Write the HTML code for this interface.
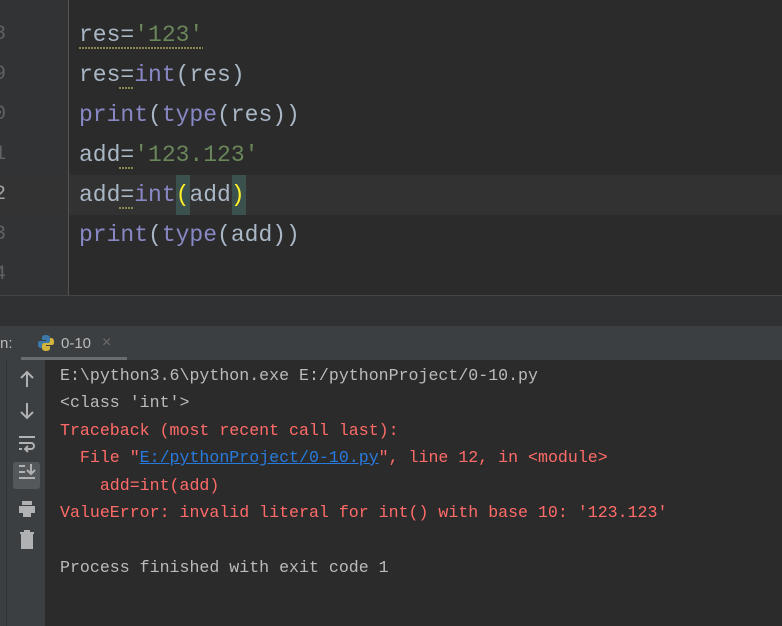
<!DOCTYPE html>
<html><head><style>
body{margin:0;width:782px;height:626px;background:#2b2b2b;overflow:hidden;position:relative;font-family:"Liberation Mono",monospace}
.abs{position:absolute}
.code{position:absolute;left:79px;font-size:23px;line-height:40px;color:#a9b7c6;white-space:pre}
.k{color:#8888c6}.s{color:#6a8759}
.ln{position:absolute;left:-6px;font-size:20px;color:#606366;line-height:40px}
.con{position:absolute;left:60px;font-size:16.6px;color:#bbbbbb;white-space:pre;line-height:27.5px}
.r{color:#ff6b68}.a{color:#287bde;text-decoration:underline}
.wv{position:absolute;height:2px;background:repeating-linear-gradient(90deg,#8a8650 0 2px,transparent 2px 3px)}
</style></head><body>
<div class="abs" style="left:0;top:0;width:68px;height:295px;background:#313335"></div>
<div class="abs" style="left:68px;top:0;width:1px;height:295px;background:#555"></div>
<div class="abs" style="left:69px;top:175px;width:713px;height:40px;background:#323232"></div>
<div class="abs" style="left:0;top:175px;width:68px;height:40px;background:#333"></div>
<div class="ln" style="top:15px">8</div><div class="ln" style="top:55px">9</div><div class="ln" style="top:95px">0</div><div class="ln" style="top:135px">1</div><div class="ln" style="top:175px;color:#a4a3a3">2</div><div class="ln" style="top:215px">3</div><div class="ln" style="top:255px">4</div>
<div class="abs" style="left:176px;top:175px;width:14px;height:40px;background:#3b514d"></div>
<div class="abs" style="left:232px;top:175px;width:14px;height:40px;background:#3b514d"></div>
<div class="code" style="top:15px">res=<span class="s">'123'</span></div>
<div class="code" style="top:55px">res=<span class="k">int</span>(res)</div>
<div class="code" style="top:95px"><span class="k">print</span>(<span class="k">type</span>(res))</div>
<div class="code" style="top:135px">add=<span class="s">'123.123'</span></div>
<div class="code" style="top:175px">add=<span class="k">int</span><span style="color:#ffef28">(</span>add<span style="color:#ffef28">)</span></div>
<div class="code" style="top:215px"><span class="k">print</span>(<span class="k">type</span>(add))</div>
<div class="wv" style="left:79px;top:47px;width:124px"></div>
<div class="wv" style="left:119px;top:87px;width:14px"></div>
<div class="wv" style="left:119px;top:167px;width:14px"></div>
<div class="wv" style="left:119px;top:207px;width:14px"></div>
<div class="abs" style="left:0;top:295px;width:782px;height:1px;background:#444"></div>
<div class="abs" style="left:0;top:296px;width:782px;height:30px;background:#2f3133"></div>
<div class="abs" style="left:0;top:326px;width:782px;height:34px;background:#3c3f41"></div>
<div class="abs" style="left:0;top:335px;font-family:'Liberation Sans',sans-serif;font-size:15px;color:#bbb">n:</div>
<svg class="abs" style="left:37px;top:334px" width="18" height="18" viewBox="0 0 18 18"><path d="M9 1C5 1 5 3 5 4v2h4v1H3C1 7 1 9 1 10s0 4 3 4h1v-3c0-1 1-2 2-2h4c1 0 2-1 2-2V4c0-2-2-3-4-3z" fill="#3c78aa"/><path d="M9 17c4 0 4-2 4-3v-2H9v-1h6c2 0 2-2 2-3s0-4-3-4h-1v3c0 1-1 2-2 2H7c-1 0-2 1-2 2v3c0 2 2 3 4 3z" fill="#d4b43a"/></svg>
<div class="abs" style="left:61px;top:335px;font-family:'Liberation Sans',sans-serif;font-size:15px;color:#bbb">0-10</div>
<div class="abs" style="left:102px;top:334px;font-family:'Liberation Sans',sans-serif;font-size:16px;color:#6e6e6e">×</div>
<div class="abs" style="left:21px;top:357px;width:106px;height:3px;background:#6a6d70"></div>
<div class="abs" style="left:0;top:360px;width:45px;height:266px;background:#3c3f41"></div>
<div class="abs" style="left:6px;top:360px;width:1px;height:266px;background:#323232"></div>
<div class="abs" style="left:13px;top:462px;width:27px;height:27px;background:#55585a;border-radius:3px"></div>
<svg class="abs" style="left:14px;top:366px" width="26" height="190" viewBox="0 0 26 190" fill="none" stroke="#afb1b3" stroke-width="2">
<path d="M13 21V6M7 12l6-6 6 6"/><path d="M13 37v15M7 46l6 6 6-6"/>
<path d="M5 71h16M5 77h12a3 3 0 010 6h-5M14 80l-3 3 3 3M5 83h3"/>
<path d="M5 100h6M5 106h6M5 112h16M17 98v9M13 104l4 4 4-4"/>
<path d="M8 135h10v4H8zM5 140h16v7H5zM9 146h8v5H9z" fill="#afb1b3" stroke="none"/>
<path d="M6 167h14M10 165h6M8 169h10v13H8z" fill="#afb1b3"/>
</svg>
<div class="con" style="top:362px">E:\python3.6\python.exe E:/pythonProject/0-10.py</div>
<div class="con" style="top:389px">&lt;class 'int'&gt;</div>
<div class="con r" style="top:417px">Traceback (most recent call last):</div>
<div class="con r" style="top:444px">  File "<span class="a">E:/pythonProject/0-10.py</span>", line 12, in &lt;module&gt;</div>
<div class="con r" style="top:472px">    add=int(add)</div>
<div class="con r" style="top:499px">ValueError: invalid literal for int() with base 10: '123.123'</div>
<div class="con" style="top:554px">Process finished with exit code 1</div>
</body></html>
